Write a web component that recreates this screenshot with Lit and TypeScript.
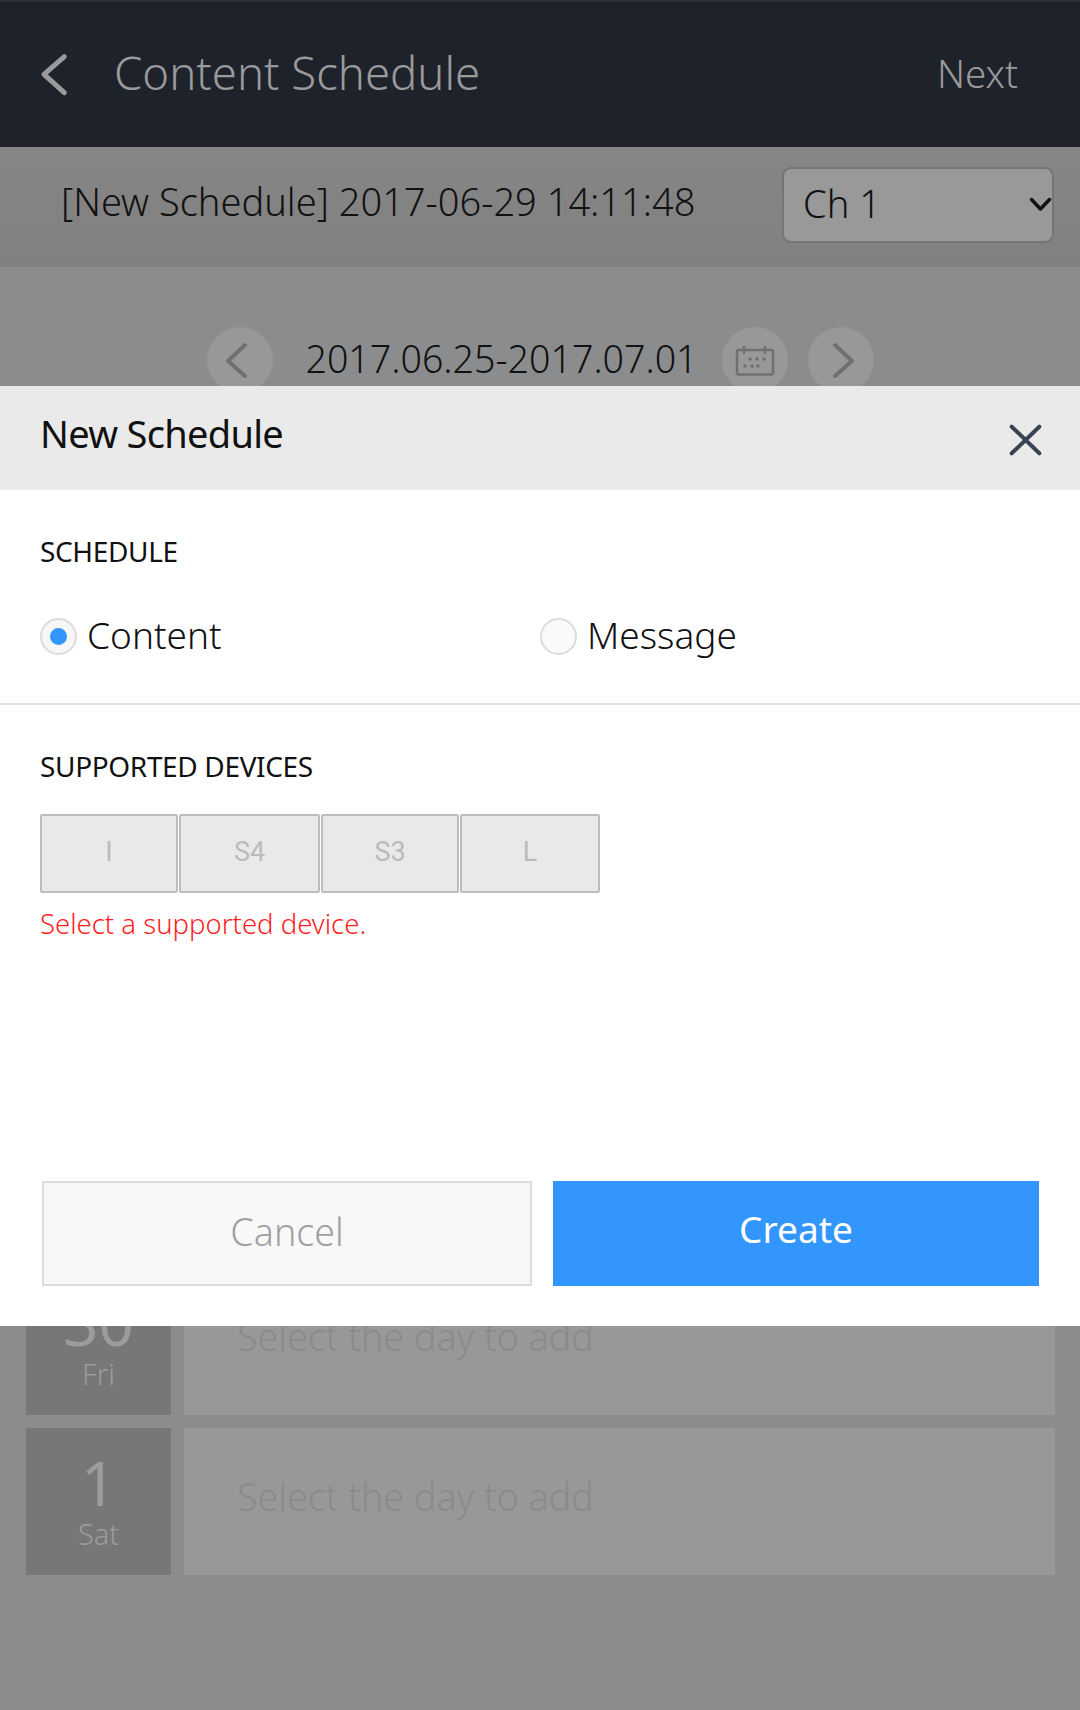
import { LitElement, html, css, svg } from "lit";
import { customElement } from "lit/decorators.js";

const days = [["30", "Fri"], ["1", "Sat"]];

@customElement("app-root")
export class AppRoot extends LitElement {
  static styles = css`
    :host {
      display: block; position: relative; width: 1080px; height: 1710px; overflow: hidden;
      background: #8b8c8e; font-family: "Noto Sans", "Liberation Sans", sans-serif; font-weight: 300; color: #111;
    }
    svg { display: block; fill: none; stroke-linecap: round; stroke-linejoin: round; }
    .top { height: 147px; background: #1e232b; border-top: 2px solid #2b2f36; display: flex; align-items: center; padding: 0 62px 0 0; box-sizing: border-box; color: #9a9a9c; }
    .back { width: 115px; height: 145px; flex: none; }
    .title { font-size: 45.5px; flex: 1; padding-bottom: 5px; margin-left: -1px; }
    .next { font-size: 38.5px; padding-bottom: 4px; }
    .sub { height: 120px; background: linear-gradient(#868686, #808080); display: flex; align-items: center; justify-content: space-between; padding: 0 26px 5px 61px; box-sizing: border-box; }
    .stamp { font-size: 38px; padding-bottom: 8px; }
    .select { width: 272px; height: 76px; box-sizing: border-box; border: 2px solid #757575; border-radius: 9px; background: #999; display: flex; align-items: center; justify-content: space-between; padding: 0 0 0 19px; font-size: 38px; }
    .select span { padding-bottom: 3px; }
    .nav { display: flex; align-items: center; padding: 60px 0 0 207px; }
    .circle { width: 66px; height: 66px; border-radius: 50%; background: #989898; flex: none; }
    .range { font-size: 37.6px; width: 449px; box-sizing: border-box; padding: 0 0 3px 8px; text-align: center; }
    .c2 { margin-left: 20px; }
    .rows { display: flex; flex-direction: column; gap: 13px; margin: 875px 25px 0 26px; }
    .row { display: flex; gap: 13px; height: 147px; }
    .date { width: 145px; background: #777; color: #9c9c9c; display: flex; flex-direction: column; align-items: center; flex: none; }
    .num { font-size: 62px; font-weight: 400; line-height: 62px; margin-top: 23px; }
    .dow { font-size: 29px; line-height: 34px; margin-top: 4px; }
    .slot { flex: 1; background: #989898; color: #8a8a8a; font-size: 37.6px; padding: 47px 0 0 53px; box-sizing: border-box; line-height: 44px; }
    .modal { position: absolute; left: 0; right: 0; top: 386px; height: 940px; background: #fff; display: flex; flex-direction: column; }
    .mhead { height: 104px; flex: none; background: #eaeaea; display: flex; justify-content: space-between; padding: 0 0 0 40px; }
    .mtitle { font-size: 38px; letter-spacing: -0.7px; font-weight: 400; line-height: 48px; margin-top: 23px; }
    .section { padding: 0 40px; }
    .label { font-size: 28px; letter-spacing: -0.35px; font-weight: 400; line-height: 34px; }
    .s1 { height: 215px; box-sizing: border-box; padding-top: 44px; border-bottom: 2px solid #e3e3e3; }
    .radios { display: flex; margin-top: 43px; }
    .radio { display: flex; align-items: center; gap: 10px; font-size: 37px; width: 501px; height: 48px; }
    .radio b { font-weight: 300; padding-bottom: 2px; }
    .dot { width: 37px; height: 37px; border: 2px solid #dcdcdc; background: #f7f7f7; border-radius: 50%; box-sizing: border-box; display: flex; align-items: center; justify-content: center; flex: none; margin-top: 3px; }
    .dot i { width: 17px; height: 17px; border-radius: 50%; background: #3396ff; }
    .radio.off .dot { background: #fafafa; }
    .s2 { padding-top: 44px; }
    .devs { display: flex; gap: 1px; margin-top: 31px; }
    .dev { height: 79px; box-sizing: border-box; border: 2px solid #bdbdbd; background: #e9e9e9; color: #bbb; font-family: "Roboto", sans-serif; font-size: 27px; font-weight: 400; display: flex; align-items: center; justify-content: center; padding-bottom: 4px; border-radius: 2px; }
    .err { color: #ff1f1f; font-size: 27.5px; line-height: 36px; margin-top: 13px; }
    .foot { margin-top: auto; display: flex; gap: 21px; padding: 0 41px 40px 42px; }
    .btn { flex: 1; height: 105px; box-sizing: border-box; display: flex; align-items: center; justify-content: center; font-size: 37.6px; padding-bottom: 4px; }
    .cancel { background: #f8f8f8; border: 2px solid #ddd; color: #a0a0a0; }
    .create { background: #3396ff; color: #fff; font-size: 37px; font-weight: 400; padding-bottom: 11px; }
  `;

  private chevron(points: string, stroke: string, w: number) {
    return svg`<polyline points=${points} stroke=${stroke} stroke-width=${w} />`;
  }

  render() {
    const widths = [138, 141, 138, 140];
    return html`
      <div class="top">
        <svg class="back" viewBox="0 0 115 145">${this.chevron("64.3,54.7 44,72.3 64.3,90.7", "#9a9a9c", 5)}</svg>
        <div class="title">Content Schedule</div>
        <div class="next">Next</div>
      </div>
      <div class="sub">
        <div class="stamp">[New Schedule] 2017-06-29 14:11:48</div>
        <div class="select">
          <span>Ch 1</span>
          <svg width="24" height="20" viewBox="0 0 24 20">${this.chevron("3.5,4.5 12.5,14 21.5,4.5", "#111", 3.5)}</svg>
        </div>
      </div>
      <div class="nav">
        <svg class="circle" viewBox="0 0 66 66">${this.chevron("38,18 21,34 38,49", "#707070", 4)}</svg>
        <div class="range">2017.06.25-2017.07.01</div>
        <svg class="circle" viewBox="0 0 66 66">
          <rect x="15" y="23" width="36" height="24.5" rx="1.5" stroke="#707070" stroke-width="2.5"></rect>
          <path d="M22 20v6M43 20v6" stroke="#707070" stroke-width="2.5"></path>
          <g fill="#707070">
            <circle cx="28" cy="32" r="1.8"></circle><circle cx="35" cy="32" r="1.8"></circle><circle cx="42" cy="32" r="1.8"></circle>
            <circle cx="23" cy="39" r="1.8"></circle><circle cx="30" cy="39" r="1.8"></circle><circle cx="36" cy="39" r="1.8"></circle>
          </g>
        </svg>
        <svg class="circle c2" viewBox="0 0 66 66">${this.chevron("27,18 44,34 27,49", "#707070", 4)}</svg>
      </div>
      <div class="rows">
        ${days.map(([n, d]) => html`
          <div class="row">
            <div class="date"><span class="num">${n}</span><span class="dow">${d}</span></div>
            <div class="slot">Select the day to add</div>
          </div>`)}
      </div>

      <div class="modal">
        <div class="mhead">
          <div class="mtitle">New Schedule</div>
          <svg width="80" height="104" viewBox="0 0 80 104">
            <path d="M11.7 40.7L39.3 67.3M39.3 40.7L11.7 67.3" stroke="#3a4452" stroke-width="4"></path>
          </svg>
        </div>
        <div class="section s1">
          <div class="label">SCHEDULE</div>
          <div class="radios">
            <div class="radio"><span class="dot"><i></i></span><b>Content</b></div>
            <div class="radio off"><span class="dot"></span><b>Message</b></div>
          </div>
        </div>
        <div class="section s2">
          <div class="label">SUPPORTED DEVICES</div>
          <div class="devs">
            ${["I", "S4", "S3", "L"].map((t, i) => html`<div class="dev" style="width:${widths[i]}px">${t}</div>`)}
          </div>
          <div class="err">Select a supported device.</div>
        </div>
        <div class="foot">
          <div class="btn cancel">Cancel</div>
          <div class="btn create">Create</div>
        </div>
      </div>
    `;
  }
}
